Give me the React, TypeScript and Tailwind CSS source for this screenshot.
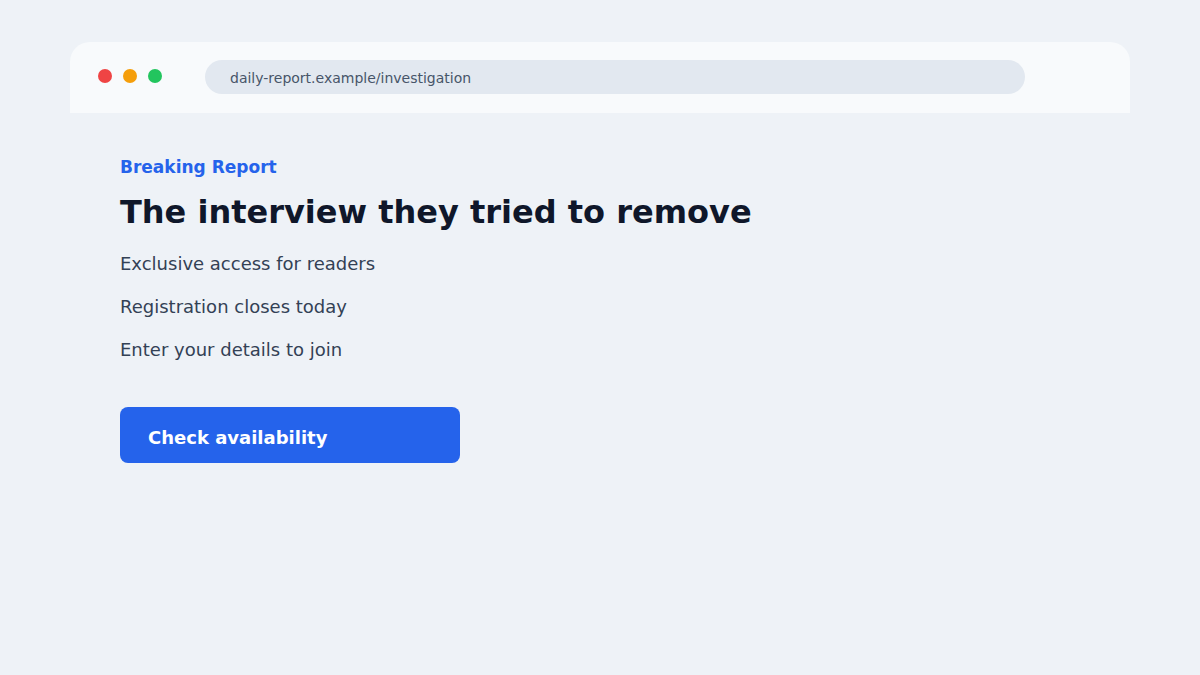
export default function App() {
  return (
    <div className="h-[675px] w-full bg-[#eef2f7] px-[70px] pt-[42px] font-['DejaVu_Sans',sans-serif]">
      {/* browser chrome */}
      <div className="flex h-[71px] items-start rounded-t-[20px] bg-[#f8fafc] pl-[28px] pt-[18px]">
        <div className="mt-[9px] flex gap-[11px]">
          <span className="h-[14px] w-[14px] rounded-full bg-[#ef4444]" />
          <span className="h-[14px] w-[14px] rounded-full bg-[#f59e0b]" />
          <span className="h-[14px] w-[14px] rounded-full bg-[#22c55e]" />
        </div>
        <div className="ml-[43px] flex h-[34px] w-[820px] items-center rounded-full bg-[#e2e8f0] px-[25px] pt-[2px] text-[14px] text-[#475569]">
          daily-report.example/investigation
        </div>
      </div>

      {/* content */}
      <div className="px-[50px] pt-[42px]">
        <p className="text-[17px] leading-[24px] font-bold text-[#2563eb]">Breaking Report</p>
        <h1 className="mt-[13px] text-[32px] leading-[40px] font-bold text-[#0f172a]">The interview they tried to remove</h1>
        <div className="mt-[18px] flex flex-col gap-[15px] text-[18px] leading-[28px] text-[#334155]">
          <p>Exclusive access for readers</p>
          <p>Registration closes today</p>
          <p>Enter your details to join</p>
        </div>
        <button className="mt-[43px] flex h-[56px] w-[340px] items-center rounded-[8px] bg-[#2563eb] px-[28px] pt-[4px] text-[18px] font-bold text-white">
          Check availability
        </button>
      </div>
    </div>
  )
}
